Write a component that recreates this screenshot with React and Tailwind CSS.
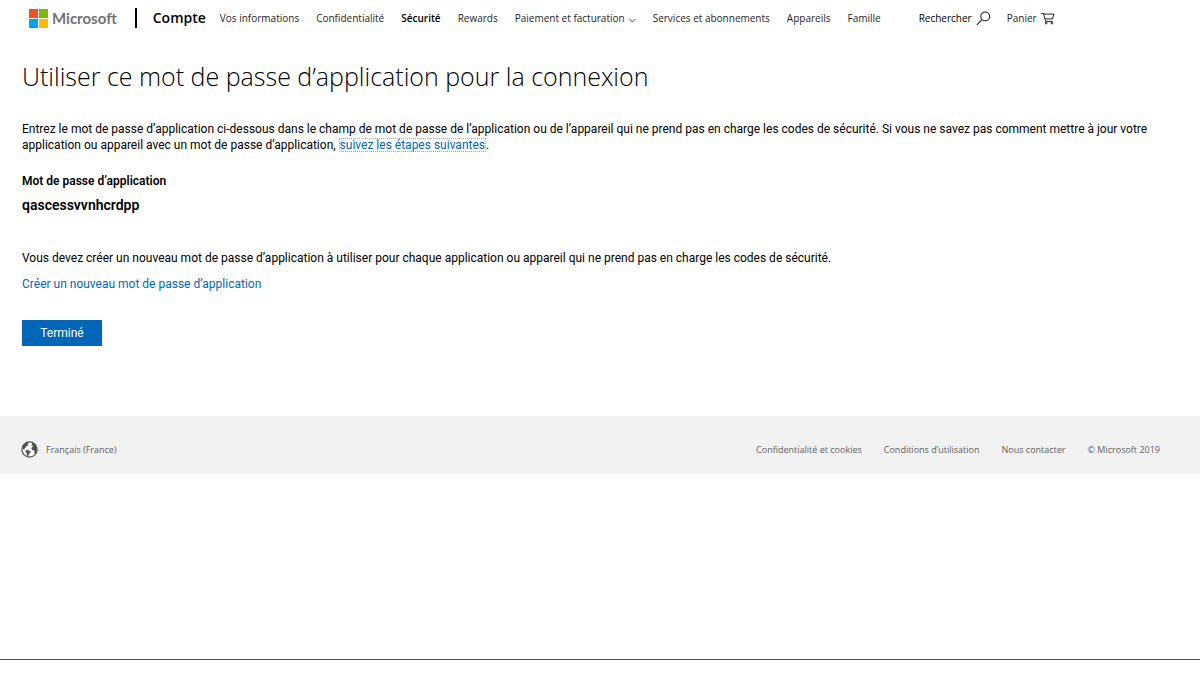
import React from 'react'

const navItems = [
  { label: 'Vos informations' },
  { label: 'Confidentialité' },
  { label: 'Sécurité', active: true },
  { label: 'Rewards' },
  { label: 'Paiement et facturation', menu: true },
  { label: 'Services et abonnements' },
  { label: 'Appareils' },
  { label: 'Famille' },
]

const footerLinks = ['Confidentialité et cookies', 'Conditions d’utilisation', 'Nous contacter']

const MicrosoftLogo = () => (
  <svg width="19" height="19" viewBox="0 0 19 19" aria-hidden="true">
    <path fill="#f25022" d="M0 0h9v9H0z" />
    <path fill="#7fba00" d="M10 0h9v9h-9z" />
    <path fill="#00a4ef" d="M0 10h9v9H0z" />
    <path fill="#ffb900" d="M10 10h9v9h-9z" />
  </svg>
)

const ChevronIcon = () => (
  <svg className="mt-1" width="7" height="5" viewBox="0 0 7 5" fill="none" stroke="#444" strokeWidth="0.9" aria-hidden="true">
    <path d="M0.4 0.8l3.1 3.2 3.1-3.2" />
  </svg>
)

const SearchIcon = () => (
  <svg width="15" height="15" viewBox="0 0 15 15" fill="none" stroke="#222" strokeWidth="1.1" aria-hidden="true">
    <circle cx="9.2" cy="5.4" r="4.4" />
    <path d="M6 8.6L0.9 13.8" />
  </svg>
)

const CartIcon = () => (
  <svg width="14" height="13" viewBox="0 0 14 13" fill="none" stroke="#222" strokeWidth="1" aria-hidden="true">
    <path d="M0.3 1.5h2.1l2.4 7.9h6.9M2.6 2.1h10.4l-1.6 4.8H4.1" />
    <circle cx="5.2" cy="11" r="0.9" />
    <circle cx="10.9" cy="11" r="0.9" />
  </svg>
)

const GlobeIcon = () => (
  <svg width="17" height="17" viewBox="0 0 17 17" aria-hidden="true">
    <circle cx="8.5" cy="8.5" r="7.6" fill="#f7f7f7" stroke="#555" strokeWidth="1.2" />
    <path
      fill="#505050"
      d="M1.2 7.6L2.3 4.3 5 1.9l2.4-.8.4 1-1.3.8.6.9-.9 1.3-1.2.4-.5 1.3-1.2.6.4 1.1-.6.3-.9-.9z"
    />
    <path fill="#505050" d="M4.8 9.2l1.9-.3 1.4.9 1.6.7-.5 1.6-1.4 1-.5 1.6.3 1.2-1.5-.4-.3-1.7-.2-1.7-1-1.2z" />
    <path
      fill="#505050"
      d="M10.6 1.6l2.7 1 2.2 2.9.5 3.1-.9 3.4-1 1.2-.7-1.3.1-1.6-.8-1-1.6-.2-.7-1.3.5-1.6 1.4-.6-.4-.9-1.1.3-.3-1.1 1-.8z"
    />
  </svg>
)

const Header = () => (
  <header className="flex h-9 items-center pl-[29px] whitespace-nowrap">
    <a href="#" className="flex items-center gap-1">
      <MicrosoftLogo />
      <span className="font-[Lato,sans-serif] text-[15px] leading-5 font-bold text-[#737373]">Microsoft</span>
    </a>
    <span className="ml-[18px] h-5 w-0.5 bg-black"></span>
    <a href="#" className="ml-4 text-sm leading-5 font-semibold text-black">
      Compte
    </a>
    <nav className="ml-[14px] flex items-center gap-[17px] text-[10px] leading-4 text-[#262626]">
      {navItems.map((item) => (
        <a
          key={item.label}
          href="#"
          className={item.active ? 'font-semibold text-black' : 'flex items-center gap-1'}
        >
          {item.label}
          {item.menu && <ChevronIcon />}
        </a>
      ))}
    </nav>
    <div className="ml-[38px] flex items-center gap-4 text-[10px] leading-4 text-black">
      <button type="button" className="flex items-center gap-1">
        Rechercher
        <SearchIcon />
      </button>
      <a href="#" className="flex items-center gap-1 text-[#262626]">
        Panier
        <CartIcon />
      </a>
    </div>
  </header>
)

const Footer = () => (
  <footer className="flex items-center justify-between bg-[#f2f2f2] pt-[25px] pr-10 pb-4 pl-[21px] text-[9px] leading-4 text-[#616161]">
    <a href="#" className="flex items-center gap-2">
      <GlobeIcon />
      Français (France)
    </a>
    <ul className="flex gap-[22px]">
      {footerLinks.map((label) => (
        <li key={label}>
          <a href="#">{label}</a>
        </li>
      ))}
      <li>© Microsoft 2019</li>
    </ul>
  </footer>
)

const App = () => {
  return (
    <div className="flex min-h-screen flex-col bg-white pb-[15px] font-['Open_Sans','Noto_Sans',sans-serif] text-black">
      <Header />
      <main className="px-[22px] pt-6 pb-[70px] font-[Roboto,sans-serif] text-xs leading-4">
        <h1 className="font-['Open_Sans',sans-serif] text-[25px] leading-8 font-light">
          Utiliser ce mot de passe d’application pour la connexion
        </h1>
        <p className="mt-[29px]">
          Entrez le mot de passe d’application ci-dessous dans le champ de mot de passe de l’application ou de
          l’appareil qui ne prend pas en charge les codes de sécurité. Si vous ne savez pas comment mettre à jour votre
          application ou appareil avec un mot de passe d’application,{' '}
          <a href="#" className="inline-block border border-dotted border-[#7fb2db] leading-3 text-[#0067b8]">
            suivez les étapes suivantes
          </a>
          .
        </p>
        <h2 className="mt-5 font-semibold">Mot de passe d’application</h2>
        <p className="mt-2 text-sm leading-4 font-semibold">qascessvvnhcrdpp</p>
        <p className="mt-[37px]">
          Vous devez créer un nouveau mot de passe d’application à utiliser pour chaque application ou appareil qui ne
          prend pas en charge les codes de sécurité.
        </p>
        <p className="mt-[10px]">
          <a href="#" className="text-[#0067b8]">
            Créer un nouveau mot de passe d’application
          </a>
        </p>
        <button type="button" className="mt-7 h-[26px] w-20 bg-[#0067b8] text-white">
          Terminé
        </button>
      </main>
      <Footer />
      <div className="mt-auto border-t border-[#4a4a4a]"></div>
    </div>
  )
}

export default App
